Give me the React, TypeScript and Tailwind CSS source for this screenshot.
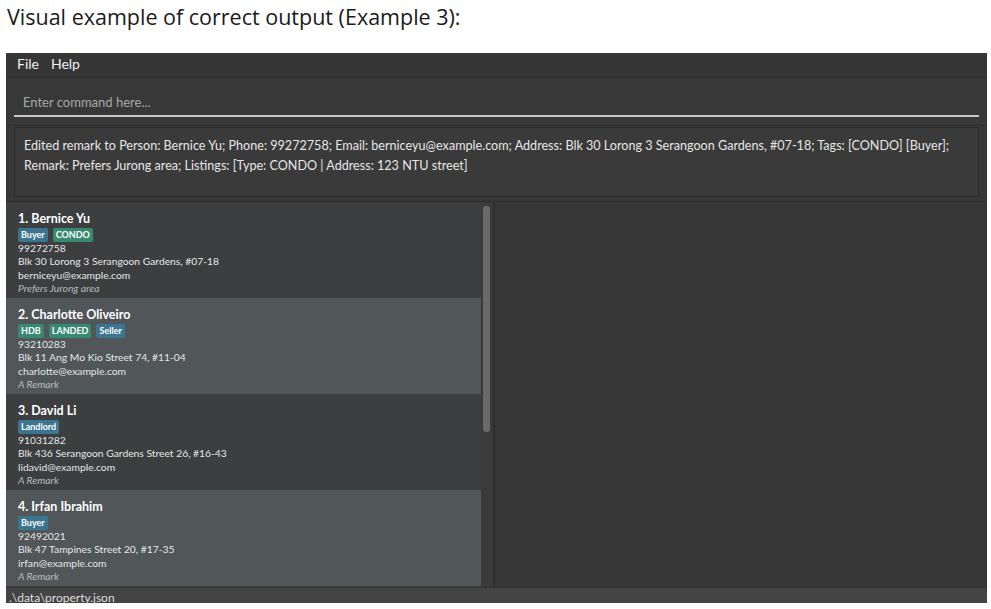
import React from "react";

type Tag = { label: string; kind: "role" | "type" };

type Person = {
  name: string;
  tags: Tag[];
  phone: string;
  address: string;
  email: string;
  remark: string;
};

const persons: Person[] = [
  {
    name: "1. Bernice Yu",
    tags: [
      { label: "Buyer", kind: "role" },
      { label: "CONDO", kind: "type" },
    ],
    phone: "99272758",
    address: "Blk 30 Lorong 3 Serangoon Gardens, #07-18",
    email: "berniceyu@example.com",
    remark: "Prefers Jurong area",
  },
  {
    name: "2. Charlotte Oliveiro",
    tags: [
      { label: "HDB", kind: "type" },
      { label: "LANDED", kind: "type" },
      { label: "Seller", kind: "role" },
    ],
    phone: "93210283",
    address: "Blk 11 Ang Mo Kio Street 74, #11-04",
    email: "charlotte@example.com",
    remark: "A Remark",
  },
  {
    name: "3. David Li",
    tags: [{ label: "Landlord", kind: "role" }],
    phone: "91031282",
    address: "Blk 436 Serangoon Gardens Street 26, #16-43",
    email: "lidavid@example.com",
    remark: "A Remark",
  },
  {
    name: "4. Irfan Ibrahim",
    tags: [{ label: "Buyer", kind: "role" }],
    phone: "92492021",
    address: "Blk 47 Tampines Street 20, #17-35",
    email: "irfan@example.com",
    remark: "A Remark",
  },
];

function PersonCard({ person, index }: { person: Person; index: number }) {
  const odd = index % 2 === 1;
  return (
    <div
      className={`h-[96px] pl-3 pt-[9px] text-[10.3px] leading-[13.4px] text-[#e6e6e6] ${
        odd ? "bg-[#515658]" : "bg-[#3c3e3f]"
      }`}
    >
      <div className="text-[12.5px] font-bold leading-[15px] text-white">{person.name}</div>
      <div className="mt-[2px] flex gap-[5px]">
        {person.tags.map((t) => (
          <span
            key={t.label}
            className={`rounded-[2px] px-[3px] text-[9px] font-bold leading-[14px] text-white ${
              t.kind === "role" ? "bg-[#3b7590]" : "bg-[#37896f]"
            }`}
          >
            {t.label}
          </span>
        ))}
      </div>
      <div>{person.phone}</div>
      <div>{person.address}</div>
      <div>{person.email}</div>
      <div className="italic text-[#b8bcbe]">{person.remark}</div>
    </div>
  );
}

export default function App() {
  return (
    <div
      className="h-[609px] w-[991px] overflow-hidden bg-white"
      style={{ fontFamily: "Lato, 'Open Sans', sans-serif" }}
    >
      <div
        className="h-[53px] pl-[7px] pt-[2px] text-[21.5px] leading-[30px] text-[#1a1a1a]"
        style={{ fontFamily: "'Open Sans', sans-serif" }}
      >
        Visual example of correct output (Example 3):
      </div>

      {/* App window */}
      <div className="ml-[6px] flex h-[550px] w-[981px] flex-col bg-[#383838]">
        {/* Menu bar */}
        <div className="flex h-[25px] items-center gap-[12px] border-b border-[#2c2c2c] bg-[#363636] pb-[3px] pl-[11px] text-[14px] text-[#f0f0f0]">
          <span>File</span>
          <span>Help</span>
        </div>

        {/* Command box */}
        <div className="px-[8px] pt-[13px]">
          <div className="h-[26px] border-b-2 border-[#c8c8c8] pl-[9px] pt-[1px] text-[13px] leading-[20px] text-[#a8a8a8]">
            Enter command here...
          </div>
        </div>

        {/* Result display */}
        <div className="mt-[8px] border-t border-[#2e2e2e] px-[8px] pt-[1px]">
          <div className="h-[70px] border border-[#2a2a2a] bg-[#3a3a3a] px-[9px] pt-[8px] text-[12.6px] leading-[20px] text-[#e6e6e6]">
            Edited remark to Person: Bernice Yu; Phone: 99272758; Email: berniceyu@example.com; Address: Blk 30
            Lorong 3 Serangoon Gardens, #07-18; Tags: [CONDO] [Buyer]; Remark: Prefers Jurong area; Listings:
            [Type: CONDO | Address: 123 NTU street]
          </div>
        </div>

        {/* Main split */}
        <div className="mt-[4px] flex flex-1 border-t border-[#2c2c2c]">
          <div className="flex w-[487px] bg-[#3c3e3f]">
            <div className="w-[475px]">
              {persons.map((p, i) => (
                <PersonCard key={p.name} person={p} index={i} />
              ))}
            </div>
            <div className="w-[12px] bg-[#3a3a3a] pl-[2px] pt-[4px]">
              <div className="h-[226px] w-[7px] rounded-[3px] bg-[#6a6a6a]" />
            </div>
          </div>
          <div className="w-[2px] bg-[#2e2e2e]" />
          <div className="flex-1 bg-[#373737]" />
        </div>

        {/* Status bar */}
        <div className="h-[16px] border-t border-[#333] bg-[#444444] pl-[3px] text-[12px] leading-[20px] text-[#dedede]">
          .\data\property.json
        </div>
      </div>
    </div>
  );
}
